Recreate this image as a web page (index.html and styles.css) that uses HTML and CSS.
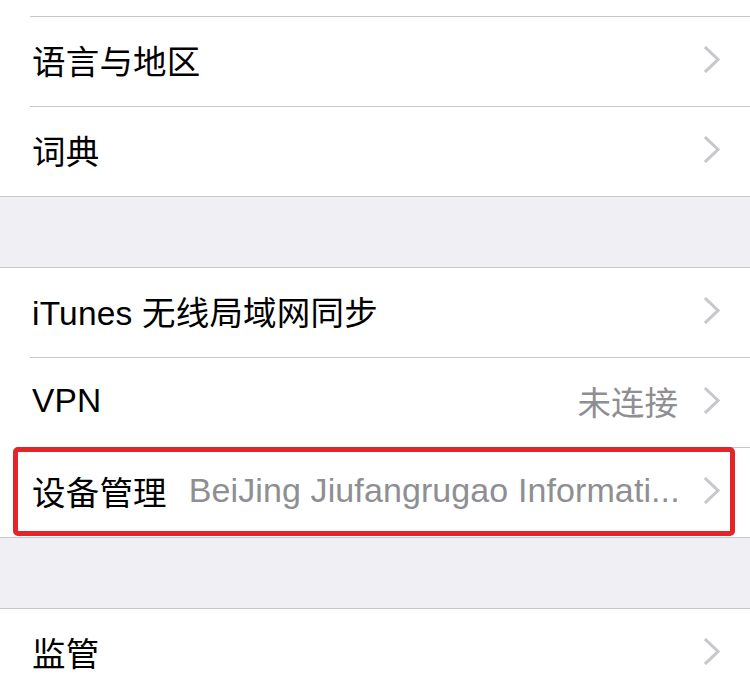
FILE: index.html
```html
<!DOCTYPE html>
<html lang="zh-CN">
<head>
<meta charset="utf-8">
<title>通用</title>
<link rel="stylesheet" href="styles.css">
</head>
<body>
<div class="screen">
  <section class="group group-top">
    <div class="row row-partial"><div class="cell"></div></div>
    <div class="row">
      <div class="cell">
        <span class="label">语言与地区</span>
        <span class="detail"></span>
        <svg class="chev" viewBox="0 0 16 27" width="16" height="27"><polyline points="2,2 14,13.5 2,25" /></svg>
      </div>
    </div>
    <div class="row">
      <div class="cell">
        <span class="label">词典</span>
        <span class="detail"></span>
        <svg class="chev" viewBox="0 0 16 27" width="16" height="27"><polyline points="2,2 14,13.5 2,25" /></svg>
      </div>
    </div>
  </section>
  <div class="gap"></div>
  <section class="group">
    <div class="row">
      <div class="cell">
        <span class="label">iTunes 无线局域网同步</span>
        <span class="detail"></span>
        <svg class="chev" viewBox="0 0 16 27" width="16" height="27"><polyline points="2,2 14,13.5 2,25" /></svg>
      </div>
    </div>
    <div class="row">
      <div class="cell">
        <span class="label">VPN</span>
        <span class="detail">未连接</span>
        <svg class="chev" viewBox="0 0 16 27" width="16" height="27"><polyline points="2,2 14,13.5 2,25" /></svg>
      </div>
    </div>
    <div class="row row-highlight">
      <div class="cell">
        <span class="label">设备管理</span>
        <span class="detail detail-left">BeiJing Jiufangrugao Informati...</span>
        <svg class="chev" viewBox="0 0 16 27" width="16" height="27"><polyline points="2,2 14,13.5 2,25" /></svg>
      </div>
      <span class="highlight-box"></span>
    </div>
  </section>
  <div class="gap"></div>
  <section class="group">
    <div class="row">
      <div class="cell">
        <span class="label">监管</span>
        <span class="detail"></span>
        <svg class="chev" viewBox="0 0 16 27" width="16" height="27"><polyline points="2,2 14,13.5 2,25" /></svg>
      </div>
    </div>
  </section>
</div>
</body>
</html>
```
FILE: styles.css
```css
* {
  box-sizing: border-box;
}

html, body {
  margin: 0;
  padding: 0;
}

body {
  background: #efeff4;
  font-family: "Liberation Sans", "Noto Sans CJK SC", sans-serif;
  width: 750px;
  height: 690px;
  overflow: hidden;
}

.screen {
  display: flex;
  flex-direction: column;
}

.group {
  background: #ffffff;
  border-top: 1px solid #c8c7cc;
  border-bottom: 1px solid #c8c7cc;
}

.group-top {
  border-top: none;
}

.gap {
  height: 70px;
}

.row {
  position: relative;
  padding-left: 30px;
}

.cell {
  height: 90px;
  display: flex;
  align-items: center;
  padding-left: 2px;
  padding-right: 30px;
  padding-bottom: 4px;
  border-bottom: 1px solid #c8c7cc;
}

.row:last-child .cell {
  border-bottom: none;
  height: 89px;
}

.row-partial .cell {
  height: 17px;
  padding-bottom: 0;
}

.label {
  font-size: 33.5px;
  color: #000000;
  white-space: nowrap;
  flex: none;
  letter-spacing: 0.2px;
}

.detail {
  flex: 1;
  min-width: 0;
  text-align: right;
  font-size: 33.5px;
  color: #8e8e93;
  white-space: nowrap;
  margin-right: 26px;
}

.detail-left {
  text-align: left;
  margin-left: 22px;
  font-size: 34px;
  letter-spacing: 0.1px;
}

.chev {
  flex: none;
  display: block;
}

.chev polyline {
  fill: none;
  stroke: #c7c7cc;
  stroke-width: 3;
  stroke-linecap: square;
  stroke-linejoin: miter;
}

.highlight-box {
  position: absolute;
  left: 13px;
  right: 15px;
  top: -1px;
  bottom: 1px;
  border: 5px solid #e5242a;
  border-radius: 5px;
  pointer-events: none;
}
```
